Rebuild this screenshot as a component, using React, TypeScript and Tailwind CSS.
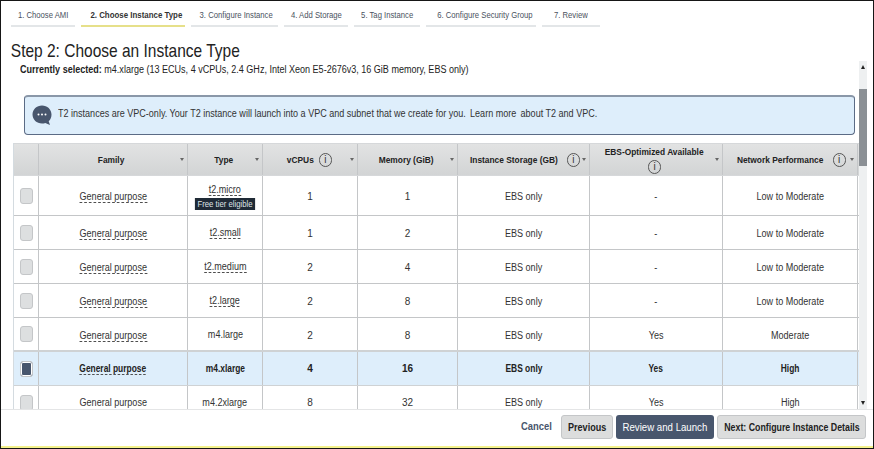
import React from "react";

const steps = [
  { t: "1. Choose AMI", w: "w-[64px]" },
  { t: "2. Choose Instance Type", w: "w-[104px]", active: true },
  { t: "3. Configure Instance", w: "w-[87px]" },
  { t: "4. Add Storage", w: "w-[64px]" },
  { t: "5. Tag Instance", w: "w-[66px]" },
  { t: "6. Configure Security Group", w: "w-[110px]" },
  { t: "7. Review", w: "w-[58px]" },
];

const rows = [
  ["t2.micro", "1", "1", "-", "Low to Moderate"],
  ["t2.small", "1", "2", "-", "Low to Moderate"],
  ["t2.medium", "2", "4", "-", "Low to Moderate"],
  ["t2.large", "2", "8", "-", "Low to Moderate"],
  ["m4.large", "2", "8", "Yes", "Moderate"],
  ["m4.xlarge", "4", "16", "Yes", "High"],
  ["m4.2xlarge", "8", "32", "Yes", "High"],
];

function T({ children, className = "scale-x-[0.905]" }: { children: React.ReactNode; className?: string }) {
  return <span className={`inline-block whitespace-nowrap ${className}`}>{children}</span>;
}

function Info() {
  return (
    <span className="inline-flex h-[14px] w-[13px] shrink-0 items-center justify-center rounded-full border border-[#555] text-[10px] leading-none font-normal text-[#333]">
      i
    </span>
  );
}

function Caret() {
  return <span className="h-0 w-0 shrink-0 border-x-[2.5px] border-t-[3px] border-x-transparent border-t-[#666]" />;
}

function Head({ w, label, info, stack }: { w: string; label: string; info?: boolean; stack?: boolean }) {
  return (
    <div className={`${w} flex shrink-0 items-center border-r border-[#c4c6c8] pr-[3px] pl-[4px]`}>
      <div className={`flex min-w-0 flex-1 items-center justify-center ${stack ? "flex-col gap-[3px]" : "gap-[3px]"}`}>
        <T className="scale-x-[0.88]">{label}</T>
        {info && <Info />}
      </div>
      <Caret />
    </div>
  );
}

function Cell({ w, lift, children }: { w: string; lift?: boolean; children?: React.ReactNode }) {
  return (
    <div className={`${w} flex shrink-0 flex-col items-center justify-center border-r border-[#c4c6c8] ${lift ? "" : "pt-[2px]"}`}>
      {children}
    </div>
  );
}

function ScrollArrow({ up }: { up?: boolean }) {
  return (
    <div className="flex h-[12px] items-center justify-center">
      <span className={`h-0 w-0 border-x-[2.5px] border-x-transparent ${up ? "border-b-[4px] border-b-[#222]" : "border-t-[4px] border-t-[#222]"}`} />
    </div>
  );
}

export default function App() {
  return (
    <div
      className="flex h-[449px] w-[874px] flex-col overflow-hidden border border-[#161616] bg-white text-[#333]"
      style={{ fontFamily: '"Liberation Sans", Arial, sans-serif' }}
    >
      <div className="flex h-[26px] shrink-0 gap-[6px] pl-[10px] text-[9.5px] leading-[28px] text-[#4a5260]">
        {steps.map((s) => (
          <div
            key={s.t}
            className={`${s.w} shrink-0 border-b-2 text-center whitespace-nowrap ${
              s.active ? "border-[#e6e08a] font-bold text-[#333]" : "border-[#e3e6e8]"
            }`}
          >
            <T className={s.active ? "scale-x-[0.83]" : "scale-x-[0.81]"}>{s.t}</T>
          </div>
        ))}
      </div>

      <h1 className="mt-[13px] h-[21px] shrink-0 origin-left scale-x-[0.816] pl-[12px] text-[19px] leading-[22px] font-normal text-[#222]">
        Step 2: Choose an Instance Type
      </h1>

      <div className="flex h-[348px] shrink-0 pl-[12px]">
        <div className="h-full w-[846px] shrink-0 overflow-hidden">
          <div className="pt-[3px] pl-[7px] text-[10px] leading-[12px] text-[#222]">
            <T className="origin-left scale-x-[0.903]">
              <b>Currently selected:</b> m4.xlarge (13 ECUs, 4 vCPUs, 2.4 GHz, Intel Xeon E5-2676v3, 16 GiB memory, EBS only)
            </T>
          </div>

          <div className="mt-[19px] mr-[4px] ml-[11px] flex h-[40px] items-center gap-[6px] rounded-[4px] border border-t-2 border-[#5b6b85] border-t-[#8a97a8] bg-[#deeefb] pl-[7px] text-[10px] text-[#333]">
            <svg width="20" height="21" viewBox="0 0 20 21" className="shrink-0">
              <path d="M10 .5C4.7.5.5 4.4.5 9.5s4.2 9 9.5 9c1.2 0 2.300-.2 3.300-.6l4.700 2.100-1.300-3.700c1.800-1.600 2.800-4 2.800-6.800C19.500 4.400 15.300.5 10 .5z" fill="#48566d" />
              <circle cx="6.500" cy="9.500" r="1" fill="#fff" />
              <circle cx="10" cy="9.500" r="1" fill="#fff" />
              <circle cx="13.500" cy="9.500" r="1" fill="#fff" />
            </svg>
            <T className="mb-[4px] origin-left scale-x-[0.903]">
              T2 instances are VPC-only. Your T2 instance will launch into a VPC and subnet that we create for you.{" "}
              <span className="mx-[2px]">Learn more</span> about T2 and VPC.
            </T>
          </div>

          <div className="mt-[8px] border-l border-[#d4dbe0] text-[10px] text-[#333]">
            <div className="flex h-[33px] border-y border-[#d6d8da] bg-gradient-to-b from-[#e2e3e3] to-[#d2d4d5] text-[9.5px] leading-[11px] font-bold text-[#222]">
              <div className="w-[25px] shrink-0 border-r border-[#c4c6c8]" />
              <Head w="w-[149px]" label="Family" />
              <Head w="w-[75px]" label="Type" />
              <Head w="w-[95px]" label="vCPUs" info />
              <Head w="w-[100px]" label="Memory (GiB)" />
              <Head w="w-[132px]" label="Instance Storage (GB)" info />
              <Head w="w-[133px]" label="EBS-Optimized Available" info stack />
              <Head w="w-[135px]" label="Network Performance" info />
            </div>
            {rows.map((r, i) => {
              const selected = i === 5;
              const lift = i >= 5;
              const scale = selected ? "scale-x-[0.84]" : "scale-x-[0.905]";
              return (
                <div
                  key={r[0]}
                  className={`flex shrink-0 border-b ${i === 0 ? "h-[40px]" : "h-[34px]"} ${
                    selected ? "border-[#cfd2d4] bg-[#deeefb] font-bold text-[#222]" : i === 4 ? "border-b-2 border-[#cfd2d4]" : "border-[#c4c6c8]"
                  }`}
                >
                  <Cell w="w-[25px]" lift>
                    <span
                      className={`h-[16px] w-[13px] rounded-[3px] border border-[#c4c6c8] ${
                        selected ? "bg-[#48566d] shadow-[inset_0_0_0_1px_#fff]" : "bg-[#dddfe0]"
                      }`}
                    />
                  </Cell>
                  <Cell w="w-[149px]" lift={lift}>
                    <T className={scale}>
                      <span className={i === 6 ? "" : "border-b border-dashed border-[#444] leading-[12px]"}>General purpose</span>
                    </T>
                  </Cell>
                  <Cell w="w-[75px]" lift>
                    <T className={scale}>
                      <span className={i < 4 ? "border-b border-dashed border-[#444] leading-[12px]" : ""}>{r[0]}</span>
                    </T>
                    {i === 0 && (
                      <T className="mt-[1px] scale-x-[0.86] bg-[#1f2a36] px-[3px] text-[9px] leading-[12px] font-normal text-[#dfe3e6]">
                        Free tier eligible
                      </T>
                    )}
                  </Cell>
                  <Cell w="w-[95px]" lift={lift}>{r[1]}</Cell>
                  <Cell w="w-[100px]" lift={lift}>{r[2]}</Cell>
                  <Cell w="w-[132px]" lift={lift}>
                    <T className={scale}>EBS only</T>
                  </Cell>
                  <Cell w="w-[133px]" lift={lift}>
                    <T className={scale}>{r[3]}</T>
                  </Cell>
                  <Cell w="w-[135px]" lift={lift}>
                    <T className={scale}>{r[4]}</T>
                  </Cell>
                </div>
              );
            })}
          </div>
        </div>

        <div className="flex h-full w-[8px] shrink-0 flex-col bg-[#eef0f1]">
          <ScrollArrow up />
          <div className="mt-[16px] h-[77px] bg-[#8b9095]" />
          <div className="flex-1" />
          <ScrollArrow />
        </div>
      </div>

      <div className="flex flex-1 items-start justify-end gap-[3px] border-t border-[#e4e5e6] pt-[5px] pr-[7px] text-[10px] font-bold">
        <T className="mr-[5px] scale-x-[0.94] leading-[24px] text-[#48566d]">Cancel</T>
        <div className="flex h-[24px] w-[52px] items-center justify-center rounded-[3px] border border-[#c4c6c8] bg-[#dcdddd] text-[#222]">
          <T>Previous</T>
        </div>
        <div className="flex h-[24px] w-[98px] items-center justify-center rounded-[3px] bg-[#48566d] font-normal text-white">
          <T className="scale-x-[0.965]">Review and Launch</T>
        </div>
        <div className="flex h-[24px] w-[149px] items-center justify-center rounded-[3px] border border-[#c4c6c8] bg-[#dcdddd] text-[#222]">
          <T className="scale-x-[0.88]">Next: Configure Instance Details</T>
        </div>
      </div>
      <div className="h-[2px] shrink-0 bg-[#f4f28c]" />
    </div>
  );
}
